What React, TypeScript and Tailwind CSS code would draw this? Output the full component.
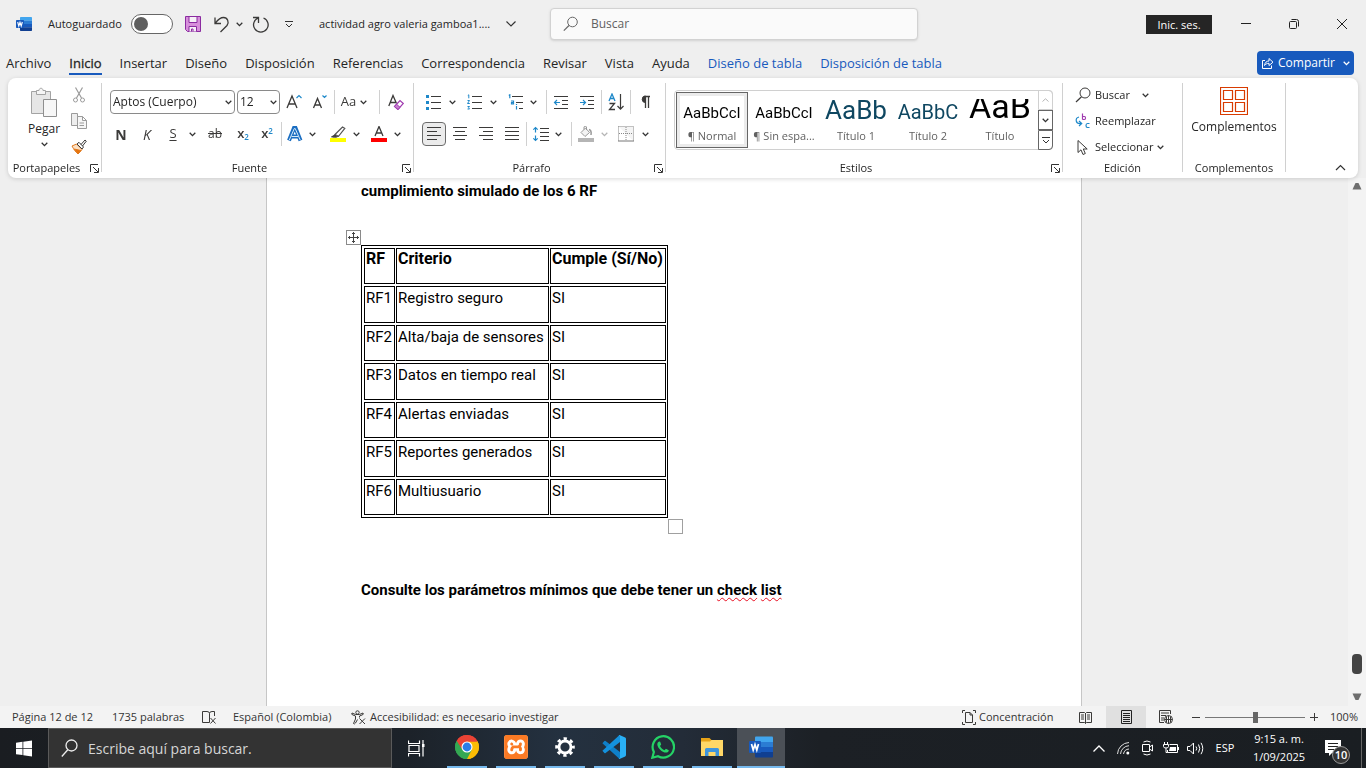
import React from "react";
import { SiXampp } from "react-icons/si";

type Kids = { children?: React.ReactNode };

const BLUE = "#1e88c9";
const INK = "#3b3a39";

/* ---------- Small shared pieces ---------- */

function Svg({ w = 16, h = 16, children }: Kids & { w?: number; h?: number }) {
  return (
    <svg width={w} height={h} viewBox={`0 0 ${w} ${h}`} fill="none" stroke={INK} strokeWidth="1" aria-hidden="true" className="shrink-0">
      {children}
    </svg>
  );
}

function Chevron({ color = "#333333" }: { color?: string }) {
  return (
    <svg width="7" height="5" viewBox="0 0 7 5" fill="none" stroke={color} strokeWidth="1.3" aria-hidden="true" className="shrink-0">
      <path d="M0.7 0.8 3.5 3.6 6.3 0.8" />
    </svg>
  );
}

function Tool({ label, className = "w-6", children }: Kids & { label: string; className?: string }) {
  return (
    <button type="button" aria-label={label} title={label} className={`flex h-6 shrink-0 items-center justify-center ${className}`}>
      {children}
    </button>
  );
}

function MoreOf({ label, className = "w-3", muted = false }: { label: string; className?: string; muted?: boolean }) {
  return (
    <Tool label={label} className={className}>
      <Chevron color={muted ? "#b5b5b5" : "#333333"} />
    </Tool>
  );
}

function Line({ className = "" }: { className?: string }) {
  return <span className={`h-6 w-px shrink-0 bg-[#d0d0d0] ${className}`} />;
}

function Launcher({ label }: { label: string }) {
  return (
    <button type="button" aria-label={label} className="absolute right-[2px] bottom-[5px]">
      <svg width="9" height="9" viewBox="0 0 9 9" fill="none" stroke="#333" aria-hidden="true">
        <path d="M0.5 8V0.5H8M3 3l5 5M8.500 4v4.500H4" />
      </svg>
    </button>
  );
}

function Group({ name, width, launcher = false, children }: Kids & { name: string; width: string; launcher?: boolean }) {
  return (
    <section aria-label={name} className={`relative flex h-[95px] shrink-0 flex-col ${width}`}>
      <div className="flex-1">{children}</div>
      <h2 className={`h-[18px] text-center text-[11px] leading-4 text-[#252525] ${launcher ? "pr-4" : ""}`}>{name}</h2>
      {launcher && <Launcher label={`Opciones de ${name}`} />}
    </section>
  );
}

function GroupLine() {
  return <span className="h-[89px] w-px shrink-0 bg-[#d0d0d0]" />;
}

function WordLogo({ size }: { size: number }) {
  return (
    <svg width={size} height={size} viewBox="0 0 24 24" aria-hidden="true" className="shrink-0">
      <path d="M6 2.500A1 1 0 0 1 7 1.500H23A1 1 0 0 1 24 2.500V7H6z" fill="#41a5ee" />
      <path d="M6 7H24V12H6z" fill="#2b7cd3" />
      <path d="M6 12H24V17H6z" fill="#185abd" />
      <path d="M6 17H24V21.500A1 1 0 0 1 23 22.500H7A1 1 0 0 1 6 21.500z" fill="#103f91" />
      <rect x="0" y="6" width="12" height="12" rx="1" fill="#185abd" />
      <path d="M2.500 9 4.200 15 6 9.500 7.800 15 9.500 9" fill="none" stroke="#fff" strokeWidth="1.700" />
    </svg>
  );
}

/* ---------- Title bar ---------- */

function TitleBar() {
  return (
    <div className="relative flex h-12 items-center pl-4">
      <WordLogo size={16} />
      <label className="ml-4 flex items-center text-[11px] text-[#252525]">
        <span className="w-[83px]">Autoguardado</span>
        <input type="checkbox" className="peer sr-only" />
        <span className="flex h-5 w-[42px] items-center rounded-full border border-[#666] bg-white pl-[2px]">
          <span className="size-[14px] rounded-full bg-[#5f5f5f]" />
        </span>
      </label>
      <button type="button" aria-label="Guardar" className="ml-3">
        <Svg>
          <path d="M.5.500H15.500V15.500H2.500L.5 13.500z" fill="#d78fdb" stroke="#8b2ba0" />
          <path d="M4 .500H12V6.500H4z" fill="#f6f0f7" stroke="#8b2ba0" />
          <path d="M4 15.500V10.500H11.500V15.500M6.500 15.500V13H8V15.500" fill="#f6f0f7" stroke="#8b2ba0" />
        </Svg>
      </button>
      <button type="button" aria-label="Deshacer" className="ml-3">
        <Svg w={18} h={18}>
          <path d="M2 2.500V8.500H8M2.300 8.200C5.500 4 8 2.500 10.500 2.500 14.500 2.500 16.500 7 14 10.500L7.500 17" strokeWidth="1.300" />
        </Svg>
      </button>
      <MoreOf label="Más acciones para deshacer" className="w-4" />
      <button type="button" aria-label="Rehacer" className="ml-1">
        <Svg w={18} h={18}>
          <path d="M2 2.500H7.500V8M7.200 3A7.300 7.300 0 1 0 12.500 3" strokeWidth="1.300" />
        </Svg>
      </button>
      <button type="button" aria-label="Personalizar barra" className="ml-4">
        <svg width="8" height="7" viewBox="0 0 8 7" fill="none" stroke="#333" aria-hidden="true">
          <path d="M0 .500H8M1 3 4 6 7 3" />
        </svg>
      </button>
      <button type="button" className="ml-[26px] flex w-[197px] items-center justify-between text-[11px] text-[#252525]">
        actividad agro valeria gamboa1....
        <svg width="10" height="6" viewBox="0 0 10 6" fill="none" stroke="#333" strokeWidth="1.200" aria-hidden="true">
          <path d="M.5.500 5 5 9.500.5" />
        </svg>
      </button>
      <label className="ml-[34px] flex h-8 w-[368px] items-center rounded-[4px] border border-[#d2d2d2] bg-[#fafafa] pl-3 shadow-sm">
        <Svg>
          <circle cx="9.500" cy="6" r="4.800" stroke="#666" />
          <path d="M6 9.500.8 14.700" stroke="#666" strokeWidth="1.200" />
        </Svg>
        <input aria-label="Buscar" placeholder="Buscar" className="ml-3 w-full bg-transparent text-[12px] outline-none placeholder:text-[#616161]" />
      </label>
      <div className="ml-auto flex items-center">
        <button type="button" className="h-[19px] w-[66px] bg-[#252525] text-[11px] leading-[19px] text-white">Inic. ses.</button>
        <button type="button" aria-label="Minimizar" className="ml-[10px] flex w-12 justify-center">
          <Svg w={10} h={10}><path d="M0 4.500H10" stroke="#222" /></Svg>
        </button>
        <button type="button" aria-label="Restaurar" className="flex w-12 justify-center">
          <Svg w={10} h={10}>
            <rect x=".5" y="2.500" width="7" height="7" rx="1" stroke="#222" />
            <path d="M2.500.500H7.500A2 2 0 0 1 9.500 2.500V7.500" stroke="#222" />
          </Svg>
        </button>
        <button type="button" aria-label="Cerrar" className="flex w-12 justify-center">
          <Svg w={10} h={10}><path d="M0 0 10 10M10 0 0 10" stroke="#222" /></Svg>
        </button>
      </div>
    </div>
  );
}

const TABS = ["Archivo", "Inicio", "Insertar", "Diseño", "Disposición", "Referencias", "Correspondencia", "Revisar", "Vista", "Ayuda", "Diseño de tabla", "Disposición de tabla"];

function Tabs() {
  return (
    <div className="flex h-[30px] items-start justify-between pr-3 pl-[6px]">
      <nav className="flex gap-[18px] text-[13px] text-[#252525]">
        {TABS.map((t, i) => (
          <button
            key={t}
            type="button"
            className={
              i === 1
                ? "h-[27px] border-b-2 border-[#185abd] pt-[5px] leading-5 [-webkit-text-stroke:0.300px_#252525]"
                : i > 9
                  ? "h-[27px] border-b-2 border-transparent pt-[5px] leading-5 text-[#185abd]"
                  : "h-[27px] border-b-2 border-transparent pt-[5px] leading-5"
            }
          >
            {t}
          </button>
        ))}
      </nav>
      <button type="button" className="mt-[3px] flex h-6 w-[97px] items-center gap-1 rounded-[4px] bg-[#185abd] px-1 text-[12px] text-white">
        <svg width="13" height="13" viewBox="0 0 13 13" fill="none" stroke="#fff" aria-hidden="true">
          <path d="M4 3.500H1.500V11.500H10.500V8.500M3.500 8.500C4 5.500 5.500 4 8 4V1.500L12 5.200 8 8.500V6.300C6 6.300 4.800 7 3.500 8.500z" />
        </svg>
        <span className="flex-1 text-left">Compartir</span>
        <Chevron color="#ffffff" />
      </button>
    </div>
  );
}

/* ---------- Ribbon ---------- */

function Clipboard() {
  return (
    <Group name="Portapapeles" width="w-[93px]" launcher>
      <div className="flex">
        <button type="button" className="flex w-[52px] flex-col items-center pt-1 pl-5 text-[12px] leading-4 text-[#252525]">
          <Svg w={28} h={31}>
            <path d="M1.500 4.500H20.500V26.500H1.500z" fill="#e6e6e6" stroke="#a3a3a3" />
            <path d="M6.500 7.500V3.500H9C9 .5 13 .5 13 3.500H15.500V7.500z" fill="#f5f5f5" stroke="#a3a3a3" />
            <path d="M13.500 12.500H26.500V29.500H13.500z" fill="#f7f7f7" stroke="#8f8f8f" />
          </Svg>
          <span className="my-[3px]">Pegar</span>
          <span className="mt-[2px]"><Chevron /></span>
        </button>
        <div className="ml-[7px] flex flex-col">
          <Tool label="Cortar" className="w-6">
            <Svg>
              <path d="M4.500.500 10.500 11M11.500.500 5.500 11" stroke="#9b9b9b" strokeWidth="1.200" />
              <circle cx="4.500" cy="13" r="2" stroke="#9b9b9b" />
              <circle cx="11.500" cy="13" r="2" stroke="#9b9b9b" />
            </Svg>
          </Tool>
          <span className="h-[2px]" />
          <Tool label="Copiar" className="w-6">
            <Svg>
              <path d="M.5.500H6.500V12.500H.5z" fill="#eee" stroke="#9b9b9b" />
              <path d="M6.500 3.500H11.500L15.500 7.500V15.500H6.500zM11.500 3.500V7.500H15.500M8.500 10H13M8.500 12.500H13" fill="#f6f6f6" stroke="#9b9b9b" />
            </Svg>
          </Tool>
          <span className="h-[2px]" />
          <Tool label="Copiar formato" className="w-6">
            <Svg>
              <path d="M1 7 5.500 5 11 10.500 7 15C5 13 3 11 1 7z" fill="#fbe0c4" stroke="#e07a1f" />
              <path d="M3 10 10 11.500 7 15z" fill="#e8740c" stroke="#e07a1f" />
              <path d="M6 5 8 3.300 12.500 8 11 10zM10 5.500 14 1 15.300 2.200 11.500 7" fill="#fff" />
            </Svg>
          </Tool>
        </div>
      </div>
    </Group>
  );
}

function FontGroup() {
  return (
    <Group name="Fuente" width="w-[311px]" launcher>
      <div className="mt-[7px] flex items-center pl-2">
        <span className="relative flex w-[125px] items-center">
          <select aria-label="Fuente" className="h-6 w-full appearance-none rounded-[4px] border border-[#8a8a8a] bg-white pl-[2px] text-[12px] text-[#252525]">
            <option>Aptos (Cuerpo)</option>
          </select>
          <span className="pointer-events-none absolute right-[3px]"><Chevron /></span>
        </span>
        <span className="relative ml-[2px] flex w-[43px] items-center">
          <select aria-label="Tamaño de fuente" className="h-6 w-full appearance-none rounded-[4px] border border-[#8a8a8a] bg-white pl-[2px] text-[12px] text-[#252525]">
            <option>12</option>
          </select>
          <span className="pointer-events-none absolute right-[3px]"><Chevron /></span>
        </span>
        <Tool label="Aumentar tamaño" className="w-7">
          <Svg>
            <path d="M1 14 6 2 11 14M2.800 10H9.200" strokeWidth="1.300" />
            <path d="M10.500 4 13 1.500 15.500 4" stroke={BLUE} strokeWidth="1.200" />
          </Svg>
        </Tool>
        <Tool label="Reducir tamaño" className="w-6">
          <Svg>
            <path d="M1.500 14 5.500 4.500 9.500 14M3 11H8" strokeWidth="1.300" />
            <path d="M10.500 1.500 12.500 3.500 14.500 1.500" stroke={BLUE} strokeWidth="1.200" />
          </Svg>
        </Tool>
        <Line className="mx-[2px]" />
        <Tool label="Cambiar mayúsculas y minúsculas" className="w-[34px] gap-1 text-[13px] text-[#3b3a39]">
          Aa <Chevron />
        </Tool>
        <Line className="mr-1 ml-2" />
        <Tool label="Borrar formato" className="w-6">
          <Svg>
            <path d="M.8 12 5 1.500 8.500 9.500M2.500 8.500H7.500" strokeWidth="1.300" />
            <path d="M6.500 12.500 12 6.500 15.300 9.500 10 15.500z" fill="#fff" stroke="#a03bb0" strokeWidth="1.200" />
            <path d="M6.500 12.500 8.500 10.200 12 13.300 10 15.500z" fill="#c77fd0" stroke="#a03bb0" />
          </Svg>
        </Tool>
      </div>
      <div className="mt-2 flex items-center pl-[6px] text-[#3b3a39]">
        <Tool label="Negrita" className="w-[26px] text-[14px] font-bold">N</Tool>
        <Tool label="Cursiva" className="w-[26px] text-[14px] italic">K</Tool>
        <Tool label="Subrayado" className="w-[26px] text-[13px] underline underline-offset-2">S</Tool>
        <MoreOf label="Más subrayados" />
        <Tool label="Tachado" className="w-[34px] text-[12px] line-through">ab</Tool>
        <Tool label="Subíndice" className="w-[22px] text-[13px] font-semibold">
          <span>x<sub className="text-[8px] text-[#1e88c9]">2</sub></span>
        </Tool>
        <Tool label="Superíndice" className="w-[26px] text-[13px] font-semibold">
          <span>x<sup className="text-[8px] text-[#1e88c9]">2</sup></span>
        </Tool>
        <Line className="mx-px" />
        <Tool label="Efectos de texto">
          <Svg>
            <path d="M2 14.500 7 2H8.500L13.500 14.500M4.500 10.500H11" stroke="#1b6ec2" strokeWidth="4" />
            <path d="M2.300 14 7.300 2.500H8.200L13.200 14M4.500 10.500H11" stroke="#d5eaf8" strokeWidth="1" />
          </Svg>
        </Tool>
        <MoreOf label="Más efectos" className="w-[10px]" />
        <Tool label="Color de resaltado" className="ml-[9px] w-6">
          <Svg>
            <path d="M5 8.500 12.500 1 14.800 2.500 8.500 10.300zM5 8.500 3.500 11H6.500L8.500 10.300" fill="#fff" stroke="#555" strokeWidth="1.200" />
            <path d="M1.500 10.800 5 9 6.500 11z" fill="#555" />
            <path d="M0 12H16V16H0z" fill="#ff0" stroke="none" />
          </Svg>
        </Tool>
        <MoreOf label="Más colores de resaltado" />
        <Tool label="Color de fuente" className="ml-[5px] w-6">
          <Svg>
            <path d="M4 10 8 .500 12 10M5.500 7H10.500" strokeWidth="1.300" />
            <path d="M0 12H16V16H0z" fill="#f00" stroke="none" />
          </Svg>
        </Tool>
        <MoreOf label="Más colores de fuente" />
      </div>
    </Group>
  );
}

function ParagraphGroup() {
  return (
    <Group name="Párrafo" width="w-[251px]" launcher>
      <div className="mt-[7px] flex items-center pl-2">
        <Tool label="Viñetas">
          <Svg>
            <path d="M0 1h3v3H0zM0 7h3v3H0zM0 13h3v3H0z" fill={BLUE} stroke="none" />
            <path d="M5 2.500H15M5 8.500H15M5 14.500H15" />
          </Svg>
        </Tool>
        <MoreOf label="Más viñetas" />
        <Tool label="Numeración" className="ml-[5px] w-6">
          <Svg>
            <path d="M.8 1.500 1.800.800V4.300M.5 6.500H2.500L.5 9.500H2.800M.5 12.500H2.500L1.500 13.800 2.500 15H.5" stroke={BLUE} />
            <path d="M5 2.500H15M5 8.500H15M5 14.500H15" />
          </Svg>
        </Tool>
        <MoreOf label="Más numeraciones" />
        <Tool label="Lista multinivel" className="ml-[5px] w-6">
          <Svg>
            <path d="M.8 1.500 1.800.800V4.300M3 7H5.500V9.800H3.500V8.500H5.500M8.500 12V15.500M8.500 10V11" stroke={BLUE} strokeWidth="1.200" />
            <path d="M4 2.500H15M8 8.500H15M11 14.500H15" />
          </Svg>
        </Tool>
        <MoreOf label="Más listas" className="w-[10px]" />
        <Line className="mr-px ml-2" />
        <Tool label="Disminuir sangría" className="w-[26px]">
          <Svg>
            <path d="M1 2.500H15M9 6.500H15M9 10.500H15M1 14.500H15" />
            <path d="M7 8.500H1.500M4 6 1.500 8.500 4 11" stroke={BLUE} strokeWidth="1.200" />
          </Svg>
        </Tool>
        <Tool label="Aumentar sangría" className="w-[26px]">
          <Svg>
            <path d="M1 2.500H15M9 6.500H15M9 10.500H15M1 14.500H15" />
            <path d="M1 8.500H6.500M4 6 6.500 8.500 4 11" stroke={BLUE} strokeWidth="1.200" />
          </Svg>
        </Tool>
        <Line className="ml-px" />
        <Tool label="Ordenar" className="w-7">
          <Svg w={17} h={18}>
            <path d="M1 8 4 1 7 8M2 5.500H6" stroke={BLUE} strokeWidth="1.300" />
            <path d="M1.500 10.500H6.500L1.500 16.500H7" strokeWidth="1.300" />
            <path d="M12.500 1V16M9.500 13 12.500 16.200 15.500 13" strokeWidth="1.200" />
          </Svg>
        </Tool>
        <Line />
        <Tool label="Mostrar todo" className="w-7">
          <Svg w={12} h={14}>
            <path d="M6.500 1.500V13M9.500 1.500V13M5 1.500H11" strokeWidth="1.300" />
            <path d="M6.500 1A3.300 3.300 0 0 0 6.500 7.600z" fill={INK} />
          </Svg>
        </Tool>
      </div>
      <div className="mt-2 flex items-center pl-2">
        <Tool label="Alinear a la izquierda" className="w-6 rounded-[4px] border border-[#6b6b6b] bg-[#ebebeb]">
          <Svg><path d="M1 1.500H15M1 5.500H11M1 9.500H15M1 13.500H11" /></Svg>
        </Tool>
        <Tool label="Centrar" className="ml-[2px] w-6">
          <Svg><path d="M1 1.500H15M3 5.500H13M1 9.500H15M3 13.500H13" /></Svg>
        </Tool>
        <Tool label="Alinear a la derecha" className="ml-[2px] w-6">
          <Svg><path d="M1 1.500H15M5 5.500H15M1 9.500H15M5 13.500H15" /></Svg>
        </Tool>
        <Tool label="Justificar" className="ml-[2px] w-6">
          <Svg><path d="M1 1.500H15M1 5.500H15M1 9.500H15M1 13.500H15" /></Svg>
        </Tool>
        <Line className="mr-[2px] ml-[2px]" />
        <Tool label="Interlineado">
          <Svg>
            <path d="M7 2.500H16M7 6.500H16M7 10.500H16M7 14.500H16" />
            <path d="M2.500 1.500V6.500M.3 3.700 2.500 1.500 4.700 3.700M2.500 9.500V14.500M.3 12.300 2.500 14.500 4.700 12.300" stroke={BLUE} strokeWidth="1.200" />
          </Svg>
        </Tool>
        <MoreOf label="Más interlineado" className="w-[10px]" />
        <Line className="mr-[2px] ml-2" />
        <Tool label="Sombreado">
          <Svg>
            <path d="M3 6.500 7.500 2 11.500 6.500 7 10.500zM6 3.500V1C6 0 8.500 0 8.500 1V4" fill="#f3f3f3" stroke="#999" />
            <path d="M11 3.500C13 4 13.500 6 13 9" stroke="#999" strokeWidth="1.500" />
            <path d="M0 12H16V16H0z" fill="#b5b5b5" stroke="none" />
          </Svg>
        </Tool>
        <MoreOf label="Más sombreado" muted />
        <Tool label="Bordes" className="ml-1 w-6">
          <Svg>
            <path d="M.5.500H15.500V15M.5.500V15M8 1V15M1 7.500H15" stroke="#888" strokeDasharray="1 1" fill="#f4f4f4" />
            <path d="M0 15H16" stroke="#777" />
          </Svg>
        </Tool>
        <MoreOf label="Más bordes" className="ml-px w-3" />
      </div>
    </Group>
  );
}

const STYLES = [
  { name: "¶ Normal", sample: "AaBbCcI", look: "text-[15px] leading-5 text-black" },
  { name: "¶ Sin espa...", sample: "AaBbCcI", look: "text-[15px] leading-5 text-black" },
  { name: "Título 1", sample: "AaBb", look: "text-[26px] leading-[26px] text-[#0f4761]" },
  { name: "Título 2", sample: "AaBbC", look: "text-[20px] leading-[22px] text-[#0f4761]" },
  { name: "Título", sample: "AaB", look: "text-[34px] leading-[34px] text-black" },
];

function StylesGroup() {
  return (
    <Group name="Estilos" width="w-[396px]" launcher>
      <div className="mt-[7px] mr-[9px] ml-2 flex h-[60px] rounded-[4px] border border-[#d0d0d0] pl-px">
        {STYLES.map((s, i) => (
          <button
            key={s.name}
            type="button"
            className={
              i === 0
                ? "my-px flex w-[72px] shrink-0 flex-col items-center border border-[#666] pt-[6px] ring-3 ring-[#ebebeb] ring-inset"
                : "my-px flex w-[72px] shrink-0 flex-col items-center pt-[7px]"
            }
          >
            <span className={`flex h-6 items-end justify-center overflow-hidden font-[Roboto,sans-serif] ${s.look}`}>{s.sample}</span>
            <span className="mt-[5px] text-[11px] leading-4 whitespace-nowrap text-[#616161]">{s.name}</span>
          </button>
        ))}
        <div className="-my-px -mr-px ml-auto flex w-[15px] flex-col">
          <button type="button" aria-label="Estilos anteriores" className="flex h-5 items-center justify-center rounded-tr-[4px] border border-[#d0d0d0]">
            <svg width="7" height="4" viewBox="0 0 7 4" fill="none" stroke="#b5b5b5" aria-hidden="true"><path d="M.5 3.500 3.500.8 6.500 3.500" /></svg>
          </button>
          <button type="button" aria-label="Estilos siguientes" className="flex h-5 items-center justify-center border border-[#666]"><Chevron /></button>
          <button type="button" aria-label="Más estilos" className="flex h-5 items-center justify-center rounded-br-[4px] border border-[#666]">
            <svg width="8" height="7" viewBox="0 0 8 7" fill="none" stroke="#333" aria-hidden="true"><path d="M0 .500H8M1 3 4 6 7 3" /></svg>
          </button>
        </div>
      </div>
    </Group>
  );
}

function EditGroup() {
  return (
    <Group name="Edición" width="w-[119px]">
      <div className="flex flex-col gap-[2px] pl-3 text-[11px] text-[#252525]">
        <button type="button" className="flex h-6 items-center gap-1">
          <Svg>
            <circle cx="10" cy="6" r="5" />
            <path d="M6.500 9.700 1 15" strokeWidth="1.200" />
          </Svg>
          <span className="w-[43px] text-left">Buscar</span>
          <Chevron />
        </button>
        <button type="button" className="flex h-6 items-center gap-1">
          <Svg>
            <path d="M7.500.500V6.500M7.500 3.500H9.500Q10.500 3.500 10.500 5T9.500 6.500H7.500" stroke="#a03bb0" strokeWidth="1.200" />
            <path d="M4 4C0 5 0 11 6 10.500M4 8 6.700 10.500 4 13" stroke={BLUE} strokeWidth="1.200" />
            <path d="M14.500 10.500H12.500Q11 10.500 11 12.500T12.500 14.500H14.500" stroke={BLUE} strokeWidth="1.200" />
          </Svg>
          Reemplazar
        </button>
        <button type="button" className="flex h-6 items-center gap-1">
          <Svg>
            <path d="M3 1.500V13.500L6 10.800 8 15.500 10.300 14.500 8.300 10H12.200z" />
          </Svg>
          Seleccionar
          <Chevron />
        </button>
      </div>
    </Group>
  );
}

function AddinsGroup() {
  return (
    <Group name="Complementos" width="w-[102px]">
      <button type="button" className="flex w-full flex-col items-center gap-1 pt-1 text-[12px] leading-4 text-[#252525]">
        <svg width="28" height="28" viewBox="0 0 28 28" fill="none" stroke="#d83b01" aria-hidden="true">
          <path d="M.5.500H27.500V27.500H.500zM3.500 3.500H12.500V12.500H3.500zM15.500 3.500H24.500V12.500H15.500zM3.500 15.500H12.500V24.500H3.500zM15.500 15.500H24.500V24.500H15.500z" strokeWidth="1.200" />
        </svg>
        Complementos
      </button>
    </Group>
  );
}

function Ribbon() {
  return (
    <div className="mx-2 flex h-[100px] items-start overflow-hidden rounded-lg bg-white pt-[5px]">
      <Clipboard />
      <GroupLine />
      <FontGroup />
      <GroupLine />
      <ParagraphGroup />
      <GroupLine />
      <StylesGroup />
      <GroupLine />
      <EditGroup />
      <GroupLine />
      <AddinsGroup />
      <GroupLine />
      <button type="button" aria-label="Contraer la cinta" className="mr-3 mb-[6px] ml-auto self-end">
        <svg width="11" height="8" viewBox="0 0 11 8" fill="none" stroke="#333" strokeWidth="1.200" aria-hidden="true"><path d="M1 6 5.500 1.500 10 6" /></svg>
      </button>
    </div>
  );
}

/* ---------- Document ---------- */

const ROWS = [
  ["RF1", "Registro seguro"],
  ["RF2", "Alta/baja de sensores"],
  ["RF3", "Datos en tiempo real"],
  ["RF4", "Alertas enviadas"],
  ["RF5", "Reportes generados"],
  ["RF6", "Multiusuario"],
];

const CELL = "h-9 border border-black pl-px pt-px text-left align-top whitespace-nowrap leading-5";
const HEAD_CELL = "h-9 border border-black pl-px text-left align-top whitespace-nowrap text-[16px] leading-5";

function Document() {
  return (
    <main className="flex min-h-0 flex-1 bg-[#efefef]">
      <div className="flex min-w-0 flex-1 justify-center overflow-hidden">
        <article className="w-[816px] border-x border-[#c6c6c6] bg-white pt-[3px] pl-[94px] font-[Roboto,sans-serif] text-[15px] text-black">
          <p className="leading-5 font-bold">cumplimiento simulado de los 6 RF</p>
          <div className="relative mt-11 w-[307px]">
            <span className="absolute -top-[15px] -left-[15px] flex size-[15px] items-center justify-center border border-[#8a8a8a] bg-white">
              <svg width="11" height="11" viewBox="0 0 11 11" fill="none" stroke="#444" aria-hidden="true">
                <path d="M5.500 0V11M0 5.500H11M4 2 5.500.500 7 2M4 9 5.500 10.500 7 9M2 4 .5 5.500 2 7M9 4 10.500 5.500 9 7" />
              </svg>
            </span>
            <table className="h-[273px] w-full table-fixed border-separate border-spacing-x-px border-spacing-y-[2px] border border-black pl-px">
              <colgroup>
                <col className="w-[31px]" />
                <col className="w-[153px]" />
                <col />
              </colgroup>
              <thead>
                <tr>
                  <th className={HEAD_CELL}>RF</th>
                  <th className={HEAD_CELL}>Criterio</th>
                  <th className={HEAD_CELL}>Cumple (Sí/No)</th>
                </tr>
              </thead>
              <tbody>
                {ROWS.map(([id, text]) => (
                  <tr key={id}>
                    <td className={CELL}>{id}</td>
                    <td className={CELL}>{text}</td>
                    <td className={CELL}>SI</td>
                  </tr>
                ))}
              </tbody>
            </table>
            <span className="absolute -right-[15px] -bottom-[16px] size-[15px] border border-[#a0a0a0] bg-white" />
          </div>
          <p className="mt-[62px] leading-5 font-bold">
            Consulte los parámetros mínimos que debe tener un{" "}
            <span className="underline decoration-[#e81123] decoration-wavy decoration-1 underline-offset-2">check</span>{" "}
            <span className="underline decoration-[#e81123] decoration-wavy decoration-1 underline-offset-2">list</span>
          </p>
        </article>
      </div>
      <div className="flex w-[18px] shrink-0 flex-col items-center bg-[#f3f3f3] pt-1 pb-[5px]">
        <svg width="10" height="8" viewBox="0 0 10 8" fill="#6e6e6e" aria-hidden="true"><path d="M3.500 1H6.500L9.500 7.500H.500z" /></svg>
        <span className="mt-auto h-5 w-[10px] rounded-[4px] bg-[#444]" />
        <svg width="10" height="8" viewBox="0 0 10 8" fill="#6e6e6e" aria-hidden="true" className="mt-[19px]"><path d="M3.500 7H6.500L9.500.500H.500z" /></svg>
      </div>
    </main>
  );
}

/* ---------- Status bar ---------- */

function StatusBar() {
  return (
    <footer className="flex h-[22px] shrink-0 items-center bg-[#f3f3f3] pl-3 text-[11px] text-[#333]">
      <span className="w-[100px]">Página 12 de 12</span>
      <span className="w-[90px]">1735 palabras</span>
      <button type="button" aria-label="Revisión ortográfica" className="w-[31px]">
        <Svg w={15} h={14}>
          <path d="M7.500 12.500H.500V1.500H5Q7.500 1.500 7.500 3.500V12.500M7.500 3.500Q7.500 1.500 10 1.500H12.500V6M8.500 8 13.500 13.500M13.500 8 8.500 13.500" />
        </Svg>
      </button>
      <button type="button" className="w-[118px] text-left">Español (Colombia)</button>
      <button type="button" className="flex items-center gap-1">
        <Svg w={15} h={15}>
          <circle cx="6.500" cy="2.500" r="1.700" />
          <path d="M1 3Q0 4.500 2 5L4.500 6V9L2.500 13.500Q3.500 14.500 4.500 13L6.500 9.500M12 3Q13 4.500 11 5L8.500 6V7.500M1 3 4.500 4.500H8.500L12 3M8.500 8.500 14 14M14 8.500 8.500 14" />
        </Svg>
        Accesibilidad: es necesario investigar
      </button>
      <div className="ml-auto flex h-full items-center">
        <button type="button" className="flex w-[103px] items-center gap-[3px]">
          <Svg w={14} h={15}>
            <path d="M3 .500H.500V3M11 .500H13.500V3M.5 12V14.500H3M13.500 12V14.500H11M3.500 2.500H8L10.500 5V12.500H3.500zM8 2.500V5H10.500" />
          </Svg>
          Concentración
        </button>
        <button type="button" aria-label="Modo de lectura" className="flex h-full w-[41px] items-center justify-center">
          <Svg w={13} h={13}>
            <path d="M6.500 2V12.500M.500 1.500H5.500L6.500 2.500 7.500 1.500H12.500V11.500H7.500L6.500 12.500 5.500 11.500H.500zM2 4H5M2 6H5M2 8H5M8 4H11M8 6H11M8 8H11" />
          </Svg>
        </button>
        <button type="button" aria-label="Diseño de impresión" className="flex h-full w-10 items-center justify-center bg-[#e0e0e0]">
          <Svg w={11} h={14}>
            <path d="M.5.500H10.500V13.500H.500zM2 3.500H9M2 5.500H9M2 7.500H9M2 9.500H9M2 11.500H9" stroke="#222" />
          </Svg>
        </button>
        <button type="button" aria-label="Diseño web" className="flex h-full w-10 items-center justify-center">
          <Svg w={14} h={14}>
            <path d="M5 12.500H.500V.500H11.500V4M2 3H10M2 5.500H7M2 8H5M2 10H5" />
            <circle cx="9.500" cy="9.500" r="4" fill="#fff" />
            <path d="M5.500 9.500H13.500M9.500 5.500V13.500M7.500 6.500V12.500M11.500 6.500V12.500" />
          </Svg>
        </button>
        <button type="button" aria-label="Alejar" className="flex w-[19px] items-center justify-center">
          <Svg w={8} h={8}><path d="M0 4.500H8" /></Svg>
        </button>
        <input
          type="range"
          aria-label="Zoom"
          min={10}
          max={190}
          defaultValue={100}
          className="h-[11px] w-[100px] appearance-none bg-[linear-gradient(#777,#777)] bg-[length:100%_1px] bg-center bg-no-repeat [&::-webkit-slider-thumb]:h-[11px] [&::-webkit-slider-thumb]:w-[5px] [&::-webkit-slider-thumb]:appearance-none [&::-webkit-slider-thumb]:bg-[#666]"
        />
        <button type="button" aria-label="Acercar" className="flex w-[18px] items-center justify-center">
          <Svg w={8} h={8}><path d="M0 4.500H8M4.500 0V8" /></Svg>
        </button>
        <span className="w-[43px] pr-2 text-right">100%</span>
      </div>
    </footer>
  );
}

/* ---------- Task bar ---------- */

function TaskApp({ label, active = false, children }: Kids & { label: string; active?: boolean }) {
  return (
    <button
      type="button"
      aria-label={label}
      className={
        active
          ? "flex h-full w-12 items-center justify-center border-b-2 border-[#76b9ed] bg-[#4b5057]"
          : "mr-[5px] ml-1 flex h-full w-10 items-center justify-center border-b-2 border-[#76b9ed]"
      }
    >
      {children}
    </button>
  );
}

function TaskBar() {
  return (
    <div className="flex h-10 shrink-0 items-center bg-[linear-gradient(90deg,#1a1d21_0%,#1c2229_30%,#243140_41%,#232c38_50%,#1c2025_60%,#1a1e22_100%)] text-white">
      <button type="button" aria-label="Inicio" className="flex h-full w-12 items-center justify-center">
        <svg width="16" height="17" viewBox="0 0 16 17" fill="#fff" aria-hidden="true">
          <path d="M0 2.700 6.500 1.800V8H0zM7.300 1.700 16 .5V8H7.300zM0 8.800H6.500V15.100L0 14.200zM7.300 8.800H16V16.500L7.300 15.200z" />
        </svg>
      </button>
      <label className="flex h-full w-[344px] items-center border border-[#5a5a5a] bg-[#333] pl-3">
        <svg width="17" height="19" viewBox="0 0 17 19" fill="none" stroke="#eee" strokeWidth="1.300" aria-hidden="true" className="shrink-0">
          <circle cx="10.500" cy="6.500" r="5.500" />
          <path d="M6.800 10.800.8 17.500" />
        </svg>
        <input aria-label="Buscar en el equipo" placeholder="Escribe aquí para buscar." className="ml-[10px] w-full bg-transparent text-[14px] outline-none placeholder:text-[#d6d6d6]" />
      </label>
      <button type="button" aria-label="Vista de tareas" className="flex h-full w-[51px] items-center justify-center pr-[2px]">
        <svg width="17" height="17" viewBox="0 0 17 17" fill="none" stroke="#fff" strokeWidth="1.200" aria-hidden="true">
          <path d="M.5.500V3.500H11.500V.500M.5 16.500V13.500H11.500V16.500M1 5.500H11V11.500H1zM15 0V16.500" />
          <path d="M14 4h2.500v3H14z" fill="#fff" stroke="none" />
        </svg>
      </button>
      <TaskApp label="Google Chrome">
        <svg width="24" height="24" viewBox="0 0 24 24" aria-hidden="true">
          <path d="M12 12 1.610 6A12 12 0 0 1 22.390 6z" fill="#ea4335" />
          <path d="M12 12 22.390 6A12 12 0 0 1 12 24z" fill="#fbbc04" />
          <path d="M12 12V24A12 12 0 0 1 1.610 6z" fill="#34a853" />
          <path d="M12 6.500H22.640A12 12 0 0 1 12 24L16.800 14.700z" fill="#fbbc04" />
          <path d="M7.200 14.700 1.610 6A12 12 0 0 1 22.600 6.500H12z" fill="#ea4335" />
          <path d="M16.800 14.700 12 24A12 12 0 0 1 1.610 6L7.200 14.700 12 17.500z" fill="#34a853" />
          <circle cx="12" cy="12" r="5.500" fill="#fff" />
          <circle cx="12" cy="12" r="4.400" fill="#2b7de9" />
        </svg>
      </TaskApp>
      <TaskApp label="XAMPP">
        <span className="rounded-[4px] bg-white">
          <SiXampp size={24} color="#fb7a24" aria-hidden="true" />
        </span>
      </TaskApp>
      <TaskApp label="Configuración">
        <svg width="20" height="20" viewBox="0 0 20 20" fill="none" stroke="#fff" aria-hidden="true">
          <circle cx="10" cy="10" r="6" strokeWidth="2.800" />
          <circle cx="10" cy="10" r="8.300" strokeWidth="3" strokeDasharray="3.260 3.260" strokeDashoffset="1.630" />
        </svg>
      </TaskApp>
      <TaskApp label="Visual Studio Code">
        <svg width="24" height="24" viewBox="0 0 24 24" aria-hidden="true">
          <path d="M.4 8.300 2.400 5.900Q3 5.500 3.600 5.900L18 17V23.800Q17.300 24 16.700 23.300z" fill="#0f7fc8" />
          <path d="M.4 15.700 2.400 18.100Q3 18.500 3.600 18.100L18 7V.2Q17.300 0 16.700.7z" fill="#1491dd" />
          <path d="M17.500 0 23.200 2.600Q24 3 24 4V20Q24 21 23.200 21.400L17.500 24Q16.800 24 16.800 23.300 18 23.500 18 22V2Q18 .5 16.800.700 16.800 0 17.500 0z" fill="#29b0f5" />
        </svg>
      </TaskApp>
      <TaskApp label="WhatsApp">
        <svg width="24" height="24" viewBox="0 0 24 24" aria-hidden="true">
          <path d="M1.300 22.700 2.900 17A10.700 10.700 0 1 1 7 21.200z" fill="none" stroke="#25d366" strokeWidth="2.200" />
          <path d="M8.500 6.500C7.500 6.500 6.300 7.700 6.300 9.200 6.500 13 11 17.600 15 17.600 16.500 17.600 17.800 16.500 17.800 15.200L14.900 13.700 13.500 15.200C11.500 14.500 9.800 12.800 9 11L10.200 9.600 9.200 6.800z" fill="#25d366" />
        </svg>
      </TaskApp>
      <TaskApp label="Explorador de archivos">
        <svg width="22" height="18" viewBox="0 0 22 18" aria-hidden="true">
          <path d="M0 0H8.500L10.500 2H22V6H0z" fill="#e8a317" />
          <path d="M0 3.500H9L10.500 2H22V18H0z" fill="#ffd767" />
          <path d="M4 18V11.500Q4 10 5.500 10H16.500Q18 10 18 11.500V18H14.500V14H7.500V18z" fill="#3f95dc" />
        </svg>
      </TaskApp>
      <TaskApp label="Word" active>
        <WordLogo size={24} />
      </TaskApp>
      <div className="ml-auto flex h-full items-center text-[12px]">
        <Tool label="Iconos ocultos" className="w-6">
          <svg width="12" height="7" viewBox="0 0 12 7" fill="none" stroke="#fff" strokeWidth="1.300" aria-hidden="true"><path d="M.5 6.500 6 1 11.500 6.500" /></svg>
        </Tool>
        <Tool label="Red" className="w-6">
          <svg width="14" height="14" viewBox="0 0 14 14" fill="none" stroke="#fff" aria-hidden="true">
            <path d="M1.500 13A12 12 0 0 1 13 1.500M4.500 13A9 9 0 0 1 13 4.700M7.500 13A6 6 0 0 1 13 8" stroke="#ddd" />
            <circle cx="11.800" cy="12" r="1.500" fill="#fff" stroke="none" />
          </svg>
        </Tool>
        <Tool label="Cámara" className="w-6">
          <svg width="13" height="16" viewBox="0 0 13 16" fill="none" stroke="#fff" aria-hidden="true">
            <path d="M2.500 2Q6 0 9.500 2M2.500 14Q6 16 9.500 14M1.500 4.500H8.500V11.500H1.500zM8.500 7 11.500 5V11L8.500 9" />
          </svg>
        </Tool>
        <Tool label="Batería" className="w-6">
          <svg width="17" height="12" viewBox="0 0 17 12" fill="none" stroke="#fff" aria-hidden="true">
            <path d="M6.500 2.500H14.500V10.500H4.500V8M15.500 5V8M1.500 0V2M4.500 0V2M.500 2.500H5.500V4.500Q5.500 6 3 6 .500 6 .5 4.500zM3 6V10.500H4.500" />
            <path d="M7 5H13V9H6z" fill="#fff" stroke="none" />
          </svg>
        </Tool>
        <Tool label="Volumen" className="w-6">
          <svg width="17" height="13" viewBox="0 0 17 13" fill="none" stroke="#fff" aria-hidden="true">
            <path d="M.5 4.500H3L6.500 1V12L3 8.500H.500zM9 4.500Q10.500 6.500 9 8.500M11.500 2.500Q14 6.500 11.500 10.500M14 .800Q17.500 6.500 14 12.200" />
          </svg>
        </Tool>
        <span className="w-9 text-center text-[11px]">ESP</span>
        <span className="ml-[6px] w-[60px] text-center text-[11px] leading-[18px] whitespace-nowrap">
          9:15 a. m.
          <br />
          1/09/2025
        </span>
        <button type="button" aria-label="Notificaciones" className="relative ml-4 flex h-full w-9 items-center">
          <svg width="17" height="16" viewBox="0 0 17 16" aria-hidden="true">
            <path d="M0 0H16V13H7L4 16V13H0z" fill="#fff" />
            <path d="M3 3.500H13M3 6.500H13M3 9.500H10" stroke="#222" />
          </svg>
          <span className="absolute top-[18px] left-[7px] flex size-[18px] items-center justify-center rounded-full border border-[#999] bg-[#333] text-[11px] font-semibold">10</span>
        </button>
        <span className="mr-1 h-full w-px bg-[#666]" />
      </div>
    </div>
  );
}

export default function App() {
  return (
    <div className="flex h-screen flex-col overflow-hidden bg-[#efefef] font-['Open_Sans',sans-serif]">
      <header className="relative z-10 shrink-0">
        <TitleBar />
        <Tabs />
        <div className="drop-shadow-sm">
          <Ribbon />
        </div>
      </header>
      <Document />
      <StatusBar />
      <TaskBar />
    </div>
  );
}
